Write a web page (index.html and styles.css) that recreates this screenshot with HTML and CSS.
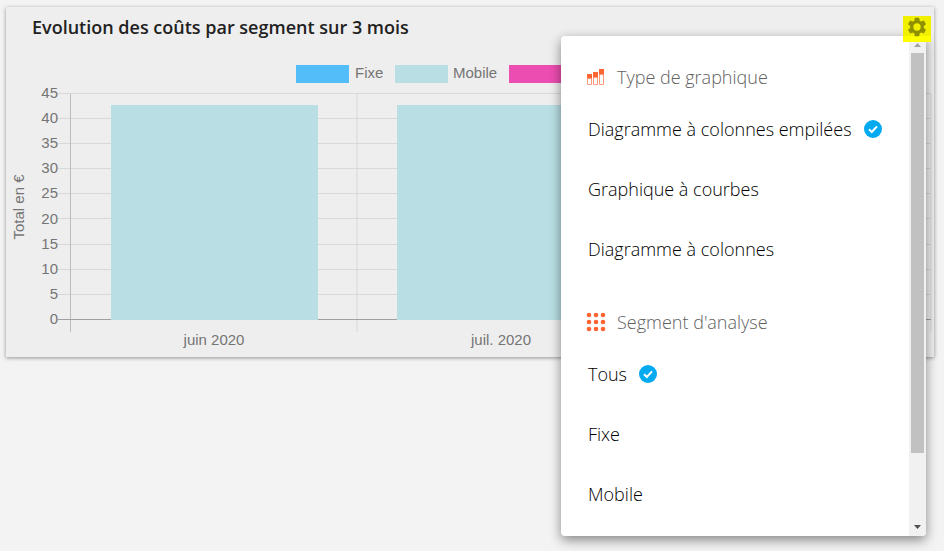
FILE: index.html
```html
<!DOCTYPE html>
<html lang="fr">
<head>
    <meta charset="UTF-8">
    <meta name="viewport" content="width=device-width, initial-scale=1.0">
    <title>Evolution des coûts</title>
    <link rel="stylesheet" href="styles.css">
</head>
<body>
    <section class="card">
        <header class="card-header">
            <h3>Evolution des coûts par segment sur 3 mois</h3>
            <button class="settings" type="button" aria-label="Paramètres">
                <svg width="22" height="22" viewBox="0 0 24 24">
                    <path d="M19.43 12.98c.04-.32.07-.64.07-.98s-.03-.66-.07-.98l2.11-1.65c.19-.15.24-.42.12-.64l-2-3.46c-.12-.22-.39-.3-.61-.22l-2.49 1c-.52-.4-1.08-.73-1.69-.98l-.38-2.65A.49.49 0 0 0 14 2h-4c-.25 0-.46.18-.49.42l-.38 2.65c-.61.25-1.17.59-1.69.98l-2.49-1c-.23-.09-.49 0-.61.22l-2 3.46c-.13.22-.07.49.12.64l2.11 1.65c-.04.32-.07.65-.07.98s.03.66.07.98l-2.11 1.65c-.19.15-.24.42-.12.64l2 3.46c.12.22.39.3.61.22l2.49-1c.52.4 1.08.73 1.69.98l.38 2.65c.03.24.24.42.49.42h4c.25 0 .46-.18.49-.42l.38-2.65c.61-.25 1.17-.59 1.69-.98l2.49 1c.23.09.49 0 .61-.22l2-3.46c.12-.22.07-.49-.12-.64l-2.11-1.65zM12 16a4 4 0 1 1 0-8 4 4 0 0 1 0 8z"/>
                </svg>
            </button>
        </header>

        <svg class="chart" viewBox="1 0 928 310" role="img" aria-label="Total en € par mois">
            <!-- légende -->
            <rect x="291" y="18" width="53" height="18" fill="#53bdfa"/>
            <text x="350" y="31">Fixe</text>
            <rect x="390" y="18" width="53" height="18" fill="#b9dfe4"/>
            <text x="448" y="31">Mobile</text>
            <rect x="504" y="18" width="53" height="18" fill="#ec4db1"/>

            <!-- grille -->
            <path class="grid" d="M53 46.5H926M53 71.5H926M53 96.5H926M53 121.5H926M53 146.5H926M53 171.5H926M53 197.5H926M53 222.5H926M53 247.5H926"/>
            <path class="grid" d="M352 47V285M639 47V285M926 47V285"/>
            <path class="axis" d="M65.5 47V285"/>
            <path class="zero" d="M53 272.5H926"/>

            <rect x="106" y="58" width="207" height="215" fill="#b9dfe4"/>
            <rect x="392" y="58" width="207" height="215" fill="#b9dfe4"/>

            <g class="ticks">
                <text x="53" y="51">45</text>
                <text x="53" y="76">40</text>
                <text x="53" y="101">35</text>
                <text x="53" y="126">30</text>
                <text x="53" y="151">25</text>
                <text x="53" y="177">20</text>
                <text x="53" y="202">15</text>
                <text x="53" y="227">10</text>
                <text x="53" y="252">5</text>
                <text x="53" y="277">0</text>
            </g>
            <g class="months">
                <text x="209" y="298">juin 2020</text>
                <text x="496" y="298">juil. 2020</text>
                <text transform="translate(19 160) rotate(-90)">Total en €</text>
            </g>
        </svg>

        <div class="menu">
            <div class="menu-list">
                <h4>
                    <svg width="18" height="18" viewBox="0 0 18 18">
                        <path fill="#ff6433" d="M0 6h5v5H0zM6 4h5v6H6zM12 1h5v6h-5z"/>
                        <path fill="none" stroke="#ff9a7a" d="M.5 10.5h4v6h-4zM6.500 9.500h4v7h-4zM12.500 6.500h4v10h-4z"/>
                    </svg>
                    Type de graphique
                </h4>
                <button type="button">Diagramme à colonnes empilées
                    <svg width="18" height="18" viewBox="0 0 18 18"><circle cx="9" cy="9" r="9" fill="#03aaf0"/><path class="tick" d="M5 9.300l2.800 2.700L13 6.300"/></svg>
                </button>
                <button type="button">Graphique à courbes</button>
                <button type="button">Diagramme à colonnes</button>

                <h4>
                    <svg width="18" height="18" viewBox="0 0 18 18" fill="#ff6433">
                        <circle cx="2" cy="2" r="2.300"/><circle cx="9" cy="2" r="2.300"/><circle cx="16" cy="2" r="2.300"/>
                        <circle cx="2" cy="9" r="2.300"/><circle cx="9" cy="9" r="2.300"/><circle cx="16" cy="9" r="2.300"/>
                        <circle cx="2" cy="16" r="2.300"/><circle cx="9" cy="16" r="2.300"/><circle cx="16" cy="16" r="2.300"/>
                    </svg>
                    Segment d'analyse
                </h4>
                <button type="button">Tous
                    <svg width="18" height="18" viewBox="0 0 18 18"><circle cx="9" cy="9" r="9" fill="#03aaf0"/><path class="tick" d="M5 9.300l2.800 2.700L13 6.300"/></svg>
                </button>
                <button type="button">Fixe</button>
                <button type="button">Mobile</button>
            </div>
            <div class="scrollbar">
                <svg width="17" height="17" viewBox="0 0 17 17"><path fill="#a3a3a3" d="M5 11h7L8.500 7z"/></svg>
                <div class="thumb"></div>
                <svg width="17" height="17" viewBox="0 0 17 17"><path fill="#505050" d="M5 6h7L8.500 10z"/></svg>
            </div>
        </div>
    </section>
</body>
</html>
```

FILE: styles.css
```css
body {
    box-sizing: border-box;
    min-height: 100vh;
    margin: 0;
    padding: 7px 10px 0 6px;
    background-color: #f3f3f3;
    font-family: 'Open Sans', sans-serif;
    font-size: 18px;
}
.card {
    position: relative;
    background-color: #eee;
    box-shadow: 0 1px 4px rgba(0, 0, 0, 0.4);
}
.card-header {
    display: flex;
    align-items: center;
    justify-content: space-between;
    height: 40px;
    padding: 0 3px 0 26px;
}
h3 {
    margin: 0;
    font-size: 18px;
    font-weight: 600;
    color: #212121;
}
button {
    border: none;
    background: none;
    font: inherit;
    cursor: pointer;
}
.settings {
    position: relative;
    z-index: 2;
    display: flex;
    align-items: center;
    justify-content: center;
    width: 28px;
    height: 26px;
    margin-top: 4px;
    padding: 0 0 4px;
    background: linear-gradient(#f0f000 20px, #ff0 20px);
}
.settings path {
    fill: #8f8f00;
}
.chart {
    display: block;
    width: 100%;
    font-family: 'Liberation Sans', sans-serif;
    font-size: 15px;
}
.chart text {
    fill: #757575;
}
.grid {
    fill: none;
    stroke: #d8d8d8;
}
.axis {
    stroke: #bdbdbd;
}
.zero {
    stroke: #a0a0a0;
}
.ticks text {
    text-anchor: end;
}
.months text {
    text-anchor: middle;
}
.menu {
    position: absolute;
    top: 29px;
    right: 8px;
    z-index: 1;
    display: flex;
    width: 365px;
    height: 500px;
    border-radius: 4px;
    overflow: hidden;
    background-color: #fff;
    box-shadow: 0 4px 12px rgba(0, 0, 0, 0.45);
}
.menu-list {
    flex: 1;
    padding-top: 19px;
    overflow: hidden;
}
.menu h4 {
    display: flex;
    align-items: center;
    gap: 12px;
    height: 44px;
    margin: 0;
    padding-left: 26px;
    font-size: 18px;
    font-weight: 300;
    color: #616161;
}
.menu h4 svg {
    overflow: visible;
}
.menu button + h4 {
    margin-top: 21px;
}
.menu button {
    display: flex;
    align-items: center;
    gap: 12px;
    width: 100%;
    height: 60px;
    padding: 0 27px;
    font-weight: 300;
    color: #000;
    white-space: nowrap;
}
.tick {
    fill: none;
    stroke: #fff;
    stroke-width: 2;
}
.scrollbar {
    display: flex;
    flex-direction: column;
    width: 17px;
    background-color: #f1f1f1;
}
.thumb {
    height: 400px;
    margin: 0 2px auto;
    background-color: #c1c1c1;
}
```
